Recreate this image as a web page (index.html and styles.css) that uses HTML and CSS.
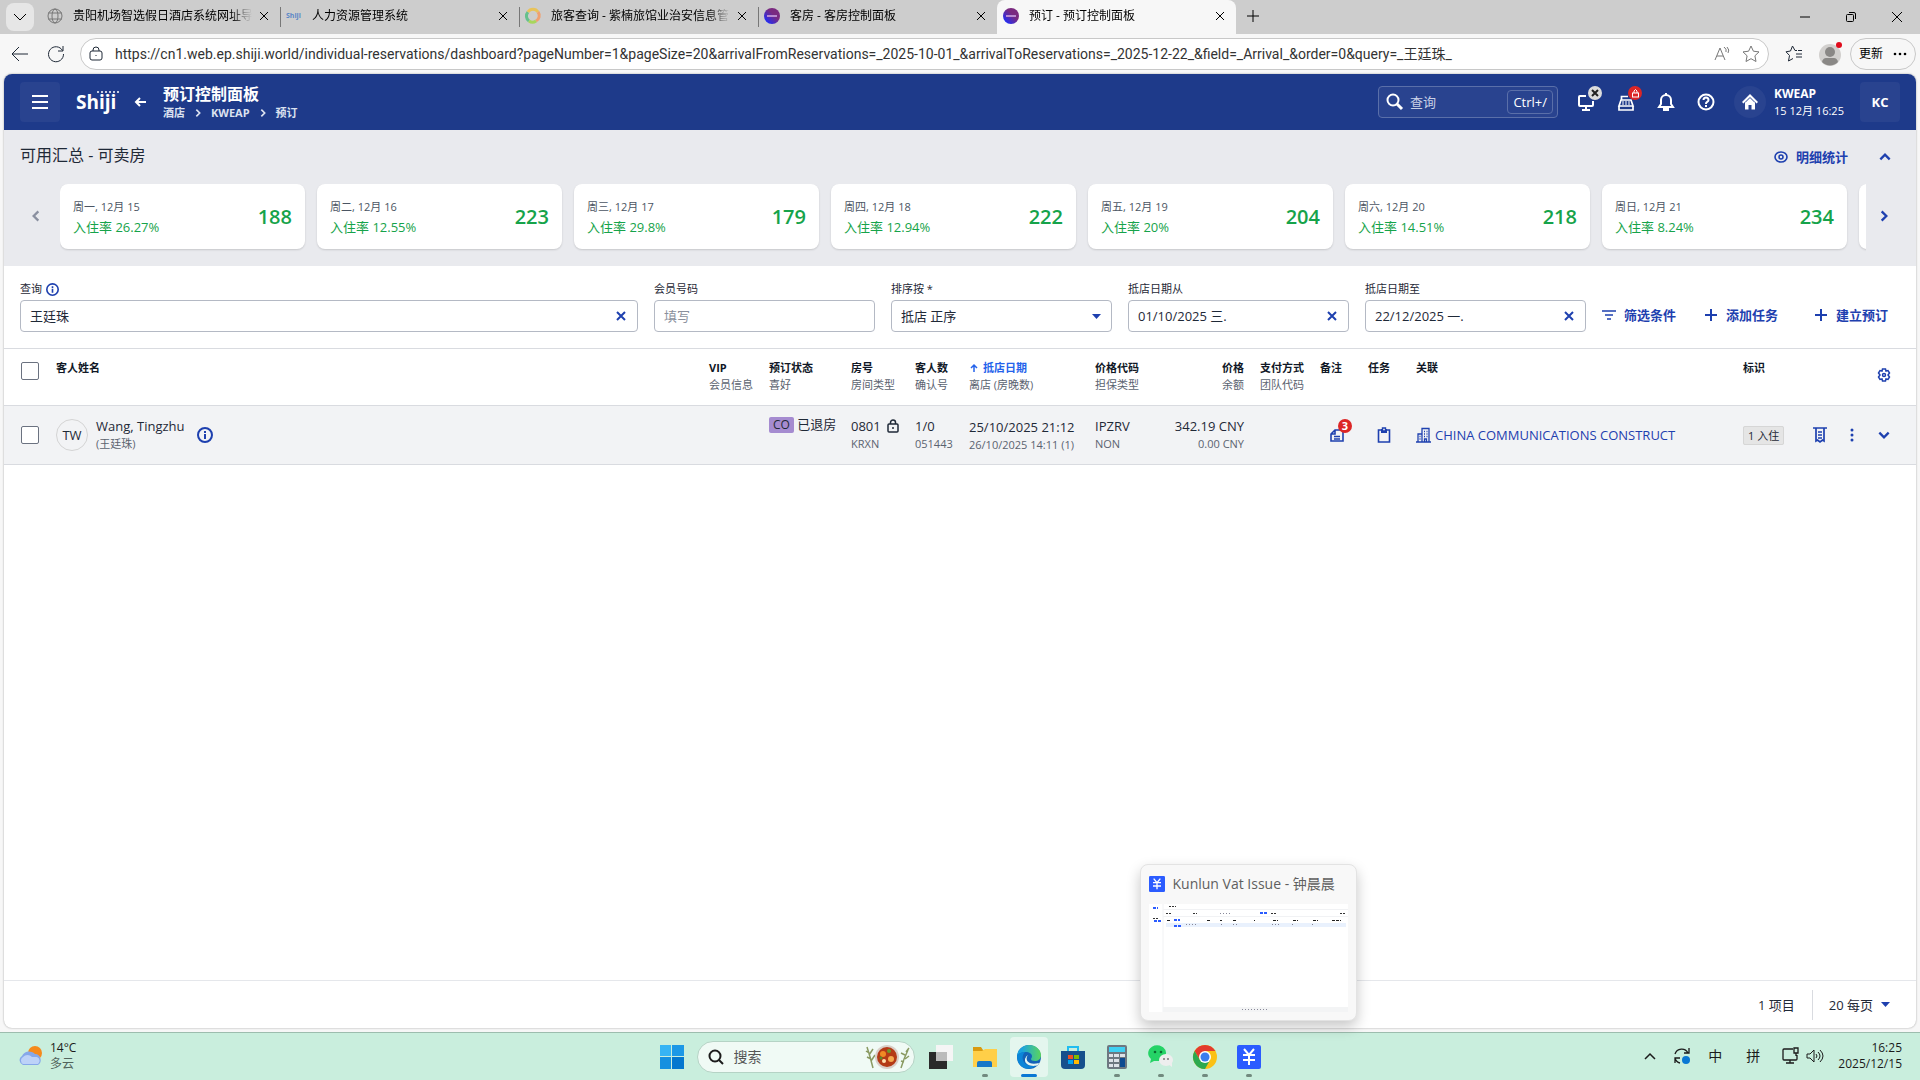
FILE: index.html
```html
<!DOCTYPE html>
<html lang="zh-CN">
  <head>
    <meta charset="UTF-8" />
    <meta name="viewport" content="width=device-width, initial-scale=1.0" />
    <title>预订 - 预订控制面板</title>
    <link rel="stylesheet" href="styles.css">
  </head>
  <body>
    <!-- Shared icons -->
    <svg class="sprite" aria-hidden="true">
      <symbol id="close" viewBox="0 0 12 12"><path d="M2 2l8 8M10 2l-8 8" /></symbol>
      <symbol id="plus" viewBox="0 0 14 14"><path d="M7 1v12M1 7h12" /></symbol>
      <symbol id="chevron" viewBox="0 0 12 12"><path d="M4 2l4 4-4 4" /></symbol>
      <symbol id="info" viewBox="0 0 16 16"><circle cx="8" cy="8" r="7" /><path d="M8 7v5M8 4v2" /></symbol>
      <symbol id="yen" viewBox="0 0 24 24">
        <rect width="24" height="24" rx="2" fill="#2b5cff" />
        <path d="M7 4l5 6 5-6M6 10h12M6 15h12M12 10v10" fill="none" stroke="#fff" stroke-width="2" />
      </symbol>
      <symbol id="brand" viewBox="0 0 16 16">
        <circle cx="8" cy="8" r="8" fill="url(#brandFill)" />
        <path d="M3 8h10" stroke="#b98ad0" stroke-width="2" />
      </symbol>
      <defs>
        <linearGradient id="brandFill" x1="0" y1="1" x2="1" y2="0">
          <stop offset="0.1" stop-color="#1a2dff" />
          <stop offset="0.6" stop-color="#7a2a80" />
        </linearGradient>
      </defs>
    </svg>

    <!-- Tab strip -->
    <div class="tabStrip">
      <button class="tabMenu" aria-label="标签页菜单">
        <svg class="line" width="14" height="14" viewBox="0 0 14 14"><path d="M1 4l6 6 6-6" /></svg>
      </button>
      <div class="tab">
        <svg class="line grey" width="16" height="16" viewBox="0 0 16 16"><circle cx="8" cy="8" r="7" /><ellipse cx="8" cy="8" rx="3" ry="7" /><path d="M1 5h14M1 11h14" /></svg>
        <span class="tabTitle">贵阳机场智选假日酒店系统网址导</span>
        <button aria-label="关闭"><svg class="line" width="12" height="12"><use href="#close" /></svg></button>
      </div>
      <div class="tab divided">
        <span class="shijiMini">Shiji</span>
        <span class="tabTitle">人力资源管理系统</span>
        <button aria-label="关闭"><svg class="line" width="12" height="12"><use href="#close" /></svg></button>
      </div>
      <div class="tab divided">
        <svg width="16" height="16" viewBox="0 0 16 16" fill="none" stroke-width="3"><path d="M4 13A6 6 0 0 1 3 4" stroke="#66c18c" /><path d="M3 4a6 6 0 0 1 10 0" stroke="#e8c35a" /><path d="M13 4a6 6 0 0 1-2 9" stroke="#f0a070" /><path d="M11 13a6 6 0 0 1-7 0" stroke="#a8d65c" /></svg>
        <span class="tabTitle">旅客查询 - 紫楠旅馆业治安信息管</span>
        <button aria-label="关闭"><svg class="line" width="12" height="12"><use href="#close" /></svg></button>
      </div>
      <div class="tab divided">
        <svg width="16" height="16"><use href="#brand" /></svg>
        <span class="tabTitle">客房 - 客房控制面板</span>
        <button aria-label="关闭"><svg class="line" width="12" height="12"><use href="#close" /></svg></button>
      </div>
      <div class="tab active">
        <svg width="16" height="16"><use href="#brand" /></svg>
        <span class="tabTitle">预订 - 预订控制面板</span>
        <button aria-label="关闭"><svg class="line" width="12" height="12"><use href="#close" /></svg></button>
      </div>
      <button class="newTab" aria-label="新建标签页"><svg class="line" width="14" height="14"><use href="#plus" /></svg></button>
      <div class="windowButtons">
        <button aria-label="最小化"><svg class="line" width="12" height="12"><path d="M1 6h10" /></svg></button>
        <button aria-label="还原"><svg class="line" width="12" height="12"><rect x="1.500" y="3.500" width="7" height="7" rx="1" /><path d="M4 1.500h5q1.500 0 1.500 1.500v5" /></svg></button>
        <button aria-label="关闭窗口"><svg class="line" width="12" height="12"><path d="M1 1l10 10M11 1L1 11" /></svg></button>
      </div>
    </div>

    <!-- Address bar -->
    <div class="toolbar">
      <button aria-label="返回"><svg class="line" width="18" height="16"><path d="M8 1L1 8l7 7M1 8h16" /></svg></button>
      <button aria-label="刷新"><svg class="line" width="18" height="18"><path d="M15.500 5.500A7.500 7.500 0 1 0 16.500 9M16 1v5h-5" /></svg></button>
      <div class="address">
        <svg class="line" width="14" height="16"><rect x="1" y="5" width="12" height="9" rx="2" /><path d="M4 5V4a3 3 0 0 1 6 0v1M7 9v1" /></svg>
        <input type="text" aria-label="地址" value="https://cn1.web.ep.shiji.world/individual-reservations/dashboard?pageNumber=1&amp;pageSize=20&amp;arrivalFromReservations=_2025-10-01_&amp;arrivalToReservations=_2025-12-22_&amp;field=_Arrival_&amp;order=0&amp;query=_王廷珠_" />
        <svg class="line grey" width="16" height="16"><path d="M1 14L6 2l5 12M3 10h6M10 1q3 2 2 5M13 1q3 3 1 6" /></svg>
        <svg class="line grey" width="18" height="18" viewBox="0 0 18 18"><path d="M9 1l2.400 5.200 5.600.7-4.100 3.900 1.100 5.700L9 13.700l-5 2.800 1.100-5.700L1 6.900l5.600-.7z" /></svg>
      </div>
      <button class="favorites" aria-label="收藏夹"><svg class="line" width="18" height="18"><path d="M12 5.500h-2L7.500 1 5.500 6 1 6.800l3.500 3.700-1 5.500L8 13.500M11 9h6M11 12h6M13 5.500h4" /></svg></button>
      <button class="profile" aria-label="个人资料">
        <svg width="24" height="26"><circle cx="11" cy="14" r="11" fill="#d2d0ce" /><circle cx="11" cy="11" r="5" fill="#8a8886" /><path d="M3 21q1-4 4-4h8q3 0 4 4a11 11 0 0 1-16 0" fill="#8a8886" /><circle cx="20" cy="4" r="3" fill="#e00b1c" /></svg>
      </button>
      <button class="update">更新 <svg width="14" height="4"><circle cx="2" cy="2" r="1.300" /><circle cx="7" cy="2" r="1.300" /><circle cx="12" cy="2" r="1.300" /></svg></button>
    </div>

    <main class="app">
      <!-- App header -->
      <header class="appHeader">
        <button class="square" aria-label="菜单"><svg class="line thick" width="18" height="16"><path d="M1 2h16M1 8h16M1 14h16" /></svg></button>
        <a href="#" class="logo">Shiji<svg width="22" height="3" fill="#fff"><circle cx="1" cy="1" r="1" /><circle cx="5" cy="1" r="1" /><circle cx="9" cy="1" r="1" /><circle cx="13" cy="1" r="1" /><circle cx="17" cy="1" r="1" /><circle cx="21" cy="1" r="1" /></svg></a>
        <a href="#" class="back" aria-label="返回"><svg class="line thick" width="12" height="10"><path d="M5 1L1 5l4 4M1 5h10" /></svg></a>
        <div class="heading">
          <h1>预订控制面板</h1>
          <nav>
            <a href="#">酒店</a>
            <svg class="line thick" width="10" height="10"><use href="#chevron" /></svg>
            <a href="#">KWEAP</a>
            <svg class="line thick" width="10" height="10"><use href="#chevron" /></svg>
            <a href="#">预订</a>
          </nav>
        </div>
        <label class="quickSearch">
          <svg class="line thick" width="18" height="18"><circle cx="7" cy="7" r="5.500" /><path d="M11 11l5 5" stroke-width="3" /></svg>
          <input type="text" placeholder="查询" />
          <kbd>Ctrl+/</kbd>
        </label>
        <div class="headerIcons">
          <button aria-label="连接">
            <svg class="line thick" width="20" height="20"><path d="M10 4H4q-1 0-1 1v8q0 1 1 1h12q1 0 1-1V9M10 14v4M6 18h8" /></svg>
            <span class="dot light"><svg class="line thick" width="8" height="8"><path d="M1 1l6 6M7 1L1 7" /></svg></span>
          </button>
          <button aria-label="收银">
            <svg class="line" width="20" height="20"><path d="M12 4.500H5.500V8M5 8h10l2 6H3zM3 14v4h14v-4" stroke-width="1.700" /><path d="M6 10h8M6 12h8" stroke-dasharray="2 1" /></svg>
            <span class="dot red"><svg class="line" width="9" height="11"><rect x="1.500" y="5" width="6" height="4" /><path d="M3 5V3q1.500-3 3 0v2" /></svg></span>
          </button>
          <button aria-label="通知"><svg class="line thick" width="20" height="20"><path d="M3 15l2-3V8a5 5 0 0 1 10 0v4l2 3zM10 1v2" /><path d="M8 17h4v1H8z" /></svg></button>
          <button aria-label="帮助"><svg class="line thick" width="20" height="20"><circle cx="10" cy="10" r="7.500" /><path d="M7.500 8q0-2.500 2.500-2.500T12.500 8q0 1-1.300 1.800T10 12M10 13v2" /></svg></button>
        </div>
        <div class="property">
          <span class="home"><svg width="18" height="18" viewBox="0 0 18 18"><path d="M9 1L1 9l1.500 1.500L4 9v7.500h3.500V12h3v4.500H14V9l1.500 1.500L17 9z" fill="#fff" /><path d="M4 9.500l5-5 5 5" fill="none" stroke="#29438f" /></svg></span>
          <div>
            <strong>KWEAP</strong>
            <span>15 12月 16:25</span>
          </div>
        </div>
        <button class="square user">KC</button>
      </header>

      <!-- Availability summary -->
      <section class="summary">
        <div class="summaryTop">
          <h2>可用汇总 - 可卖房</h2>
          <button class="textButton"><svg class="line" width="14" height="14"><ellipse cx="7" cy="7" rx="6" ry="5" stroke-width="1.600" /><circle cx="7" cy="7" r="2" stroke-width="1.600" /></svg>明细统计</button>
          <button class="iconButton" aria-label="收起"><svg class="line thick up" width="14" height="14"><use href="#chevron" /></svg></button>
        </div>
        <div class="carousel">
          <button class="iconButton muted" aria-label="上一页"><svg class="line thick flip" width="14" height="14"><use href="#chevron" /></svg></button>
          <div class="cards">
            <article class="card"><div><span class="day">周一, 12月 15</span><span class="rate">入住率 26.27%</span></div><strong>188</strong></article>
            <article class="card"><div><span class="day">周二, 12月 16</span><span class="rate">入住率 12.55%</span></div><strong>223</strong></article>
            <article class="card"><div><span class="day">周三, 12月 17</span><span class="rate">入住率 29.8%</span></div><strong>179</strong></article>
            <article class="card"><div><span class="day">周四, 12月 18</span><span class="rate">入住率 12.94%</span></div><strong>222</strong></article>
            <article class="card"><div><span class="day">周五, 12月 19</span><span class="rate">入住率 20%</span></div><strong>204</strong></article>
            <article class="card"><div><span class="day">周六, 12月 20</span><span class="rate">入住率 14.51%</span></div><strong>218</strong></article>
            <article class="card"><div><span class="day">周日, 12月 21</span><span class="rate">入住率 8.24%</span></div><strong>234</strong></article>
            <article class="card"></article>
          </div>
          <button class="iconButton next" aria-label="下一页"><svg class="line thick" width="14" height="14"><use href="#chevron" /></svg></button>
        </div>
      </section>

      <!-- Filters -->
      <form class="filters">
        <div class="field wide">
          <label for="query">查询 <svg class="line blue" width="13" height="13" stroke-width="2"><use href="#info" /></svg></label>
          <div class="control">
            <input type="text" id="query" value="王廷珠" />
            <button type="button" aria-label="清除"><svg class="line thick" width="12" height="12"><use href="#close" /></svg></button>
          </div>
        </div>
        <div class="field">
          <label for="member">会员号码</label>
          <div class="control"><input type="text" id="member" placeholder="填写" /></div>
        </div>
        <div class="field">
          <label for="sort">排序按 *</label>
          <div class="control">
            <select id="sort"><option>抵店 正序</option></select>
            <svg class="caret" width="9" height="5"><path d="M0 0h9L4.500 5z" /></svg>
          </div>
        </div>
        <div class="field">
          <label for="from">抵店日期从</label>
          <div class="control">
            <input type="text" id="from" value="01/10/2025 三." />
            <button type="button" aria-label="清除"><svg class="line thick" width="12" height="12"><use href="#close" /></svg></button>
          </div>
        </div>
        <div class="field">
          <label for="to">抵店日期至</label>
          <div class="control">
            <input type="text" id="to" value="22/12/2025 一." />
            <button type="button" aria-label="清除"><svg class="line thick" width="12" height="12"><use href="#close" /></svg></button>
          </div>
        </div>
        <div class="filterActions">
          <button type="button" class="textButton"><svg class="line" width="14" height="14"><path d="M0 3h14M3 7h8M5 11h4" stroke-width="1.600" /></svg>筛选条件</button>
          <button type="button" class="textButton"><svg class="line thick" width="14" height="14"><use href="#plus" /></svg>添加任务</button>
          <button type="button" class="textButton last"><svg class="line thick" width="14" height="14"><use href="#plus" /></svg>建立预订</button>
        </div>
      </form>

      <!-- Reservations -->
      <table>
        <colgroup>
          <col class="colCheck" /><col /><col class="colVip" /><col class="colStatus" /><col class="colRoom" /><col class="colGuests" />
          <col class="colDate" /><col class="colCode" /><col class="colPrice" /><col class="colPay" /><col class="colNote" />
          <col class="colTask" /><col class="colLink" /><col class="colFlag" /><col class="colActions" />
        </colgroup>
        <thead>
          <tr>
            <th class="check"><input type="checkbox" aria-label="全选" /></th>
            <th>客人姓名</th>
            <th>VIP<small>会员信息</small></th>
            <th>预订状态<small>喜好</small></th>
            <th>房号<small>房间类型</small></th>
            <th>客人数<small>确认号</small></th>
            <th><a href="#" class="sorted"><svg class="line thick" width="8" height="8"><path d="M4 8V1M1 4l3-3 3 3" stroke-width="1.500" /></svg>抵店日期</a><small>离店 (房晚数)</small></th>
            <th>价格代码<small>担保类型</small></th>
            <th class="number">价格<small>余额</small></th>
            <th>支付方式<small>团队代码</small></th>
            <th>备注</th>
            <th>任务</th>
            <th>关联</th>
            <th>标识</th>
            <th class="settings">
              <button class="iconButton" aria-label="设置"><svg class="line" width="14" height="14"><path d="M5.500 1h3l.5 2 2-.5 1.500 2.500-1.500 2 1.500 2L11 11.500l-2-.5-.5 2h-3L5 11l-2 .5L1.500 9 3 7 1.500 5 3 2.500l2 .5z" stroke-width="1.500" /><circle cx="7" cy="7" r="1.500" stroke-width="1.500" /></svg></button>
            </th>
          </tr>
        </thead>
        <tbody>
          <tr>
            <td class="check"><input type="checkbox" aria-label="选择 Wang, Tingzhu" /></td>
            <td>
              <div class="guest">
                <span class="avatar">TW</span>
                <div>Wang, Tingzhu<small>(王廷珠)</small></div>
                <svg class="line thick blue" width="16" height="16"><use href="#info" /></svg>
              </div>
            </td>
            <td></td>
            <td class="status"><span class="code">CO</span> 已退房</td>
            <td><span class="room">0801 <svg class="line" width="12" height="14"><rect x="1" y="5" width="10" height="8" rx="1" stroke-width="1.500" /><path d="M3.500 5V3.500a2.500 2.500 0 0 1 5 0V5M6 8v2" stroke-width="1.500" /></svg></span><small>KRXN</small></td>
            <td>1/0<small>051443</small></td>
            <td class="dates">25/10/2025 21:12<small>26/10/2025 14:11 (1)</small></td>
            <td>IPZRV<small>NON</small></td>
            <td class="number">342.19 CNY<small>0.00 CNY</small></td>
            <td></td>
            <td class="center">
              <button class="iconButton noteButton" aria-label="备注"><svg class="line" width="16" height="16"><path d="M6 3h8v11H2V7zM6 3v4H2M5 9.500h6M5 12h6" stroke-width="1.600" /></svg><span class="dot count">3</span></button>
            </td>
            <td class="center">
              <button class="iconButton" aria-label="任务"><svg class="line" width="14" height="16"><path d="M1.500 3h11v12h-11z" stroke-width="1.600" /><path d="M4 2h6v4H4z" fill="#1e40af" stroke="none" /><path d="M5.500 1h3v3h-3z" fill="#f2f3f5" stroke-width="1.400" /></svg></button>
            </td>
            <td><a href="#" class="company"><svg class="line" width="15" height="16"><path d="M0 15h15M2 15V7h4M6 15V1.500h7V15M8 4.500h1M10.500 4.500h1M8 7h1M10.500 7h1M8 9.500h1M10.500 9.500h1M3.500 9.500h1M3.500 12h1M8.500 15v-3h2v3" stroke-width="1.300" /></svg>CHINA COMMUNICATIONS CONSTRUCT</a></td>
            <td><span class="flag">1 入住</span></td>
            <td>
              <div class="rowActions">
                <button class="iconButton" aria-label="账单"><svg class="line thick" width="14" height="16"><path d="M0 1h14M3 1v13l1.500-1L7 15l2.500-2 1.500 1V1M5 5h4M5 8h4M5 11h4" stroke-width="1.700" /></svg></button>
                <button class="iconButton" aria-label="更多"><svg width="4" height="14" fill="#1e40af"><circle cx="2" cy="2" r="1.500" /><circle cx="2" cy="7" r="1.500" /><circle cx="2" cy="12" r="1.500" /></svg></button>
                <button class="iconButton" aria-label="展开"><svg class="line thick down" width="14" height="14"><use href="#chevron" /></svg></button>
              </div>
            </td>
          </tr>
        </tbody>
      </table>

      <footer class="pager">
        <span class="total">1 项目</span>
        <button>20 每页 <svg class="caret" width="9" height="5"><path d="M0 0h9L4.500 5z" /></svg></button>
      </footer>
    </main>

    <!-- Taskbar -->
    <div class="taskbar">
      <div class="weather">
        <svg width="26" height="22"><circle cx="17" cy="8" r="7" fill="#f58a1c" /><path d="M5 20a5 5 0 0 1-1-9 8 8 0 0 1 13-2 6 6 0 0 1 3 11z" fill="#86a8ea" /><path d="M5 19a4 4 0 0 1 0-7 6 6 0 0 1 9 0h5a4 4 0 0 1 1 7z" fill="#bdd2f8" /></svg>
        <div>14°C<span>多云</span></div>
      </div>
      <div class="apps">
        <button aria-label="开始"><svg width="24" height="24"><path d="M0 0h11v11H0z" fill="#36b4f4" /><path d="M12 0h12v11H12z" fill="#1c98e6" /><path d="M0 12h11v12H0z" fill="#1590e0" /><path d="M12 12h12v12H12z" fill="#0477cf" /></svg></button>
        <label class="taskSearch">
          <svg class="line thick" width="16" height="16"><circle cx="7" cy="7" r="5.500" /><path d="M11 11l4 4" /></svg>
          <input type="text" placeholder="搜索" />
          <svg width="46" height="26"><path d="M9 24Q6 12 3 3M2 7l3 2M9 5l-4 6M3 13l4 2M11 11l-4 6M37 24q3-10 7-18M37 17l3 1M45 12l-4 3M37 9l4 2M45 4l-3 4" stroke="#8a9a62" stroke-width="1.500" fill="none" /><circle cx="23" cy="13" r="12" fill="#d9cfc8" /><circle cx="23" cy="13" r="10" fill="#b43a16" /><circle cx="19" cy="10" r="3" fill="#f08a24" /><circle cx="27" cy="15" r="3" fill="#f5a94e" /><circle cx="25" cy="7" r="2" fill="#6c9a2c" /><circle cx="20" cy="17" r="2" fill="#ffe0ae" /><circle cx="17" cy="14" r="1.500" fill="#5b8a28" /></svg>
        </label>
        <button aria-label="任务视图"><svg width="24" height="24"><path d="M0 7h18v17H0z" fill="#2a2a2a" /><path d="M7 0h17v16H7z" fill="#f5f5f5" /><path d="M7 7h11v9H7z" fill="#bbb" /></svg></button>
        <button class="running" aria-label="文件资源管理器"><svg width="26" height="24"><path d="M1 2h8l2 3h12v4H1z" fill="#d99a10" /><path d="M1 6h9l3-2h12v18H1z" fill="#ffcf48" /><path d="M5 22v-4q0-2 2-2h11q2 0 2 2v4z" fill="#1678c8" /></svg></button>
        <button class="current" aria-label="Edge"><svg width="24" height="24" viewBox="0 0 24 24"><defs><linearGradient id="edge" x1="0" y1="0" x2="1" y2="0"><stop offset="0.2" stop-color="#1ba3e0" /><stop offset="1" stop-color="#5bd65b" /></linearGradient></defs><circle cx="12" cy="12" r="12" fill="#1363b8" /><path d="M0 11C1 4 6 0 12 0c7 0 12 5 12 10 0 4-3 6-6 6-3 0-4-1-4-2 0-1 1-1 1-3 0-2-3-4-6-4-4 0-8 2-9 4z" fill="url(#edge)" /><path d="M0 11c1-3 5-4 8-4-5 5-2 13 6 14l5-1C15 25 7 25 3 20 1 18 0 14 0 11z" fill="#0c85d8" /><path d="M11 10c-4 5 1 11 11 8l-1 2c-4 2-14 1-13-6q1-3 3-4z" fill="#e6f6f0" /></svg></button>
        <button aria-label="Microsoft Store"><svg width="24" height="24"><path d="M7 6V2h10v4" stroke="#21bdf0" stroke-width="2" fill="none" /><path d="M0 6h24v14q0 4-4 4H4q-4 0-4-4z" fill="#16508c" /><path d="M7 10h5v4H7z" fill="#f25022" /><path d="M13 10h5v4h-5z" fill="#7fba00" /><path d="M7 15h5v4H7z" fill="#00a4ef" /><path d="M13 15h5v4h-5z" fill="#ffb900" /></svg></button>
        <button class="running" aria-label="计算器"><svg width="20" height="24"><rect width="20" height="24" rx="2" fill="#6d7780" /><path d="M2 2h16v5H2z" fill="#3fd0f2" /><path d="M2 9h4v3H2zM7 9h5v3H7zM13 9h5v3h-5zM2 14h4v3H2zM7 14h5v3H7zM2 19h4v3H2zM7 19h5v3H7z" fill="#dde2e8" /><path d="M13 13h5v9h-5z" fill="#0e4a90" /></svg></button>
        <button class="running" aria-label="微信"><svg width="26" height="24"><path d="M2 18l1-4a9 8 0 1 1 8 2l-5 0z" fill="#25d366" /><circle cx="7" cy="7" r="1.300" fill="#0a6b30" /><circle cx="13" cy="7" r="1.300" fill="#0a6b30" /><ellipse cx="18" cy="15" rx="7" ry="6" fill="#eee" /><path d="M20 19l4 3v-4z" fill="#eee" /><circle cx="16" cy="14" r="1" fill="#777" /><circle cx="20" cy="14" r="1" fill="#777" /></svg></button>
        <button class="running" aria-label="Chrome"><svg width="24" height="24" viewBox="0 0 24 24"><circle cx="12" cy="12" r="12" fill="#fbc116" /><path d="M1.600 6A12 12 0 0 1 22.400 6H12L7 15z" fill="#e33b2e" /><path d="M1.600 6A12 12 0 0 0 12 24l5-9H7z" fill="#2da94f" /><circle cx="12" cy="12" r="6" fill="#fff" /><circle cx="12" cy="12" r="4.500" fill="#3b7ded" /></svg></button>
        <div class="previewSlot">
          <button class="running" aria-label="Kunlun Vat Issue"><svg width="24" height="24"><use href="#yen" /></svg></button>
          <div class="preview">
            <div class="previewTitle"><svg width="16" height="16"><use href="#yen" /></svg>Kunlun Vat Issue - 钟晨晨</div>
            <svg class="thumb" width="199" height="108">
              <path d="M0 0h199v108H0z" fill="#fff" />
              <path d="M14 0v108M14 5.500h185M14 12.500h185" stroke="#f1f2f4" />
              <path d="M14 103h185v5H14z" fill="#f3f4f5" />
              <path d="M17 19h180v4H17z" fill="#e9f1fd" />
              <path d="M4 4h5M5 17h8M25 16h6M25 22h8M111 9h7" stroke="#2b5cff" stroke-width="2" stroke-dasharray="3 1" />
              <path d="M20 2.500h7M17 9.500h6M44 9.500h4M122 9.500h6M191 9.500h6M4 14.500h5" stroke="#333" stroke-dasharray="2 1" />
              <path d="M18 16.500h3M58 16.500h3M71 16.500h2M84 16.500h3M105 16.500h1M124 16.500h5M144 16.500h5M164 16.500h5M183 16.500h9" stroke="#222" stroke-dasharray="3 1" />
              <path d="M37 20.500h11M72 20.500h1M84 20.500h4M123 20.500h7M143 20.500h1M163 20.500h1M71 9.500h12M93 105.500h25" stroke="#889" stroke-dasharray="1 2" />
            </svg>
          </div>
        </div>
      </div>
      <div class="tray">
        <button aria-label="隐藏的图标"><svg class="line" width="12" height="8"><path d="M1 7l5-5 5 5" stroke-width="1.500" /></svg></button>
        <button aria-label="同步"><svg class="line" width="18" height="18"><path d="M2 7a7 7 0 0 1 13-1M16 1v5h-5M2 11a7 7 0 0 0 5 5M2 16v-5h5" stroke-width="1.300" /><circle cx="13" cy="13" r="4" fill="#0a78d4" stroke="none" /></svg></button>
        <span class="ime">中</span>
        <span class="ime pinyin">拼</span>
        <button class="network" aria-label="网络"><svg class="line" width="17" height="17"><path d="M11 2H2q-1 0-1 1v9q0 1 1 1h12q1 0 1-1V8M8 13v3M4 16h8M12 1h4v5h-4zM14 6v3" stroke-width="1.300" /></svg></button>
        <button aria-label="音量"><svg class="line" width="18" height="16"><path d="M1 6h3l4-4v12l-4-4H1zM10 6q2 2 0 4M12 4q4 4 0 8M14 2q6 6 0 12" /></svg></button>
        <div class="clock">16:25<span>2025/12/15</span></div>
      </div>
    </div>
  </body>
</html>
```
FILE: styles.css
```css
* {
  box-sizing: border-box;
}
body {
  margin: 0;
  min-height: 100vh;
  display: flex;
  flex-direction: column;
  font-family: "Open Sans", "Noto Sans CJK SC", sans-serif;
  font-size: 13px;
  line-height: 18px;
  color: #1f2937;
  background-color: #f7f7f7;
}
button,
input,
select {
  font: inherit;
  color: inherit;
  background: none;
  border: none;
  padding: 0;
  margin: 0;
}
button {
  cursor: pointer;
  display: inline-flex;
  align-items: center;
  justify-content: center;
}
input {
  min-width: 0;
  outline: none;
}
a {
  color: inherit;
  text-decoration: none;
}
svg {
  flex: none;
  display: block;
  overflow: visible;
}
.sprite {
  position: absolute;
  width: 0;
  height: 0;
}
.line {
  fill: none;
  stroke: currentColor;
}
.thick {
  stroke-width: 2;
}
.grey {
  color: #777;
}
.blue {
  color: #1e40af;
}
.up {
  rotate: -90deg;
}
.down {
  rotate: 90deg;
}
.flip {
  rotate: 180deg;
}

/* Tab strip */
.tabStrip {
  display: flex;
  height: 34px;
  background-color: #cdcdcd;
  font-size: 12px;
  color: #000;
}
.tabMenu {
  width: 28px;
  height: 28px;
  margin: 3px 7px 3px 6px;
  border-radius: 8px;
  background-color: #e6e6e6;
}
.tab {
  display: flex;
  align-items: center;
  flex: 0 1 239px;
  min-width: 0;
  padding: 0 10px 2px 6px;
  gap: 10px;
}
.tab button {
  margin-left: -4px;
}
.tab.divided {
  background: linear-gradient(#777, #777) 0 7px / 1px 20px no-repeat;
}
.tab.active {
  background-color: #f7f7f7;
  border-radius: 8px 8px 0 0;
}
.tabTitle {
  flex: 1;
  overflow: hidden;
  white-space: nowrap;
  mask-image: linear-gradient(to right, #000 88%, transparent);
}
.shijiMini {
  width: 16px;
  font-size: 7px;
  font-weight: bold;
  color: #5b87c7;
}
.newTab {
  width: 34px;
  height: 32px;
}
.windowButtons {
  display: flex;
  margin-left: auto;
}
.windowButtons button {
  width: 46px;
}

/* Address bar */
.toolbar {
  display: flex;
  align-items: center;
  height: 40px;
  padding: 0 4px 0 11px;
}
.toolbar > button {
  width: 18px;
  margin-right: 18px;
}
.address {
  display: flex;
  align-items: center;
  gap: 12px;
  flex: 1;
  height: 32px;
  margin-left: -3px;
  padding: 0 8px;
  border: 1px solid #c8c8c8;
  border-radius: 16px;
  background-color: #fff;
}
.address input {
  flex: 1;
  font-family: Roboto, "Noto Sans CJK SC", sans-serif;
  font-size: 14px;
  color: #333;
}
.toolbar .favorites {
  margin: 0 16px;
}
.toolbar .profile {
  width: 24px;
  margin-right: 7px;
}
.toolbar .update {
  width: 66px;
  height: 32px;
  margin: 0;
  gap: 10px;
  border: 1px solid #c8c8c8;
  border-radius: 16px;
  font-size: 12px;
  color: #000;
}

/* App */
.app {
  flex: 1;
  display: flex;
  flex-direction: column;
  margin: 0 4px 4px;
  border-radius: 8px;
  background-color: #fff;
  box-shadow: 0 0 2px #999;
  overflow: hidden;
}
.appHeader {
  display: flex;
  align-items: center;
  height: 56px;
  padding: 0 16px;
  color: #fff;
  background-color: #1e3a8a;
}
.square {
  width: 40px;
  height: 40px;
  border-radius: 4px;
  background-color: #29438f;
}
.logo {
  position: relative;
  margin-left: 16px;
  width: 43px;
  font-size: 19px;
  font-weight: bold;
  line-height: 24px;
}
.logo svg {
  position: absolute;
  top: 1px;
  right: 0;
}
.back {
  margin: 0 16px;
}
.heading {
  padding-top: 1px;
}
.heading h1 {
  margin: 0;
  font-size: 16px;
  line-height: 20px;
}
.heading nav {
  display: flex;
  align-items: center;
  gap: 8px;
  font-size: 11px;
  font-weight: bold;
  color: #dbe1f0;
}
.quickSearch {
  display: flex;
  align-items: center;
  gap: 6px;
  width: 180px;
  height: 32px;
  margin-left: auto;
  padding: 0 4px 0 7px;
  border: 1px solid #5a6fa9;
  border-radius: 4px;
  background-color: #29438f;
}
.quickSearch input {
  flex: 1;
}
.quickSearch input::placeholder {
  color: #c9d1e6;
  opacity: 1;
}
.quickSearch kbd {
  padding: 2px 5px;
  border: 1px solid #5a6fa9;
  border-radius: 4px;
  font-family: inherit;
}
.headerIcons {
  display: flex;
  gap: 20px;
  margin-left: 18px;
}
.headerIcons button {
  position: relative;
}
.dot {
  position: absolute;
  top: -8px;
  right: -7px;
  display: flex;
  align-items: center;
  justify-content: center;
  width: 14px;
  height: 14px;
  border-radius: 50%;
  font-size: 11px;
  font-weight: bold;
  line-height: 14px;
}
.headerIcons .dot {
  top: -6px;
  right: -6px;
}
.light {
  color: #222;
  background-color: #ddd;
}
.red,
.count {
  color: #fff;
  background-color: #dc2626;
}
.property {
  display: flex;
  align-items: center;
  gap: 8px;
  width: 126px;
  margin-left: 18px;
  white-space: nowrap;
}
.home {
  display: flex;
  align-items: center;
  justify-content: center;
  width: 32px;
  height: 32px;
  border-radius: 50%;
  background-color: #29438f;
}
.property strong,
.property div span {
  display: block;
  line-height: 17px;
}
.property strong {
  font-size: 12px;
}
.property div span {
  font-size: 11px;
}
.user {
  font-weight: bold;
}

/* Availability summary */
.summary {
  height: 136px;
  background-color: #e9eaee;
}
.summaryTop {
  display: flex;
  align-items: center;
  height: 54px;
  padding: 0 24px 0 16px;
}
.summaryTop h2 {
  flex: 1;
  margin: 0;
  padding-bottom: 4px;
  font-size: 16px;
  font-weight: normal;
}
.textButton {
  gap: 8px;
  font-weight: bold;
  color: #1e40af;
  white-space: nowrap;
}
.iconButton {
  color: #1e40af;
}
.muted {
  color: #8a90a0;
}
.summaryTop .iconButton {
  margin-left: 30px;
}
.carousel {
  display: flex;
}
.carousel > .iconButton {
  flex: none;
  padding-bottom: 4px;
}
.carousel > .muted {
  width: 56px;
  padding-left: 8px;
}
.carousel > .next {
  width: 50px;
  padding-right: 14px;
}
.cards {
  display: flex;
  gap: 12px;
  flex: 1;
  min-width: 0;
  padding-bottom: 3px;
  overflow: hidden;
}
.card {
  display: flex;
  align-items: center;
  justify-content: space-between;
  flex: 0 0 245px;
  height: 65px;
  padding: 0 13px;
  border-radius: 8px;
  background-color: #fff;
  box-shadow: 0 1px 2px rgba(0, 0, 0, 0.15);
}
.day,
.rate {
  display: block;
  line-height: 21px;
}
.day {
  font-size: 11px;
  color: #4b5563;
}
.rate,
.card strong {
  color: #16a34a;
}
.card strong {
  font-size: 20px;
  font-weight: 600;
}

/* Filters */
.filters {
  display: flex;
  align-items: flex-start;
  gap: 16px;
  padding: 14px 28px 16px 16px;
  border-bottom: 1px solid #d9dbe0;
}
.field {
  flex: 0 1 221px;
  min-width: 0;
}
.field.wide {
  flex: 1 1 auto;
}
.field label {
  display: flex;
  align-items: center;
  gap: 4px;
  height: 18px;
  margin-bottom: 2px;
  font-size: 11px;
}
.control {
  display: flex;
  align-items: center;
  height: 32px;
  padding: 0 10px 0 9px;
  border: 1px solid #b4b9c4;
  border-radius: 4px;
}
.control input,
.control select {
  flex: 1;
  min-width: 0;
}
.control select {
  appearance: none;
}
.control ::placeholder {
  color: #8a909c;
  opacity: 1;
}
.control button {
  color: #1e40af;
}
.caret {
  fill: #1e40af;
}
.filterActions {
  display: flex;
  gap: 28px;
  padding-top: 26px;
}
.filterActions .last {
  margin-left: 8px;
}

/* Reservations */
table {
  width: 100%;
  table-layout: fixed;
  border-collapse: separate;
  border-spacing: 0;
}
.colCheck {
  width: 52px;
}
.colVip,
.colPay {
  width: 60px;
}
.colStatus {
  width: 82px;
}
.colRoom {
  width: 64px;
}
.colGuests {
  width: 54px;
}
.colDate {
  width: 126px;
}
.colCode {
  width: 65px;
}
.colPrice {
  width: 100px;
}
.colNote,
.colTask {
  width: 48px;
}
.colLink {
  width: 327px;
}
.colFlag {
  width: 67px;
}
.colActions {
  width: 106px;
}
th,
td {
  padding: 0;
  text-align: left;
  white-space: nowrap;
  border-bottom: 1px solid #d9dbe0;
}
th {
  height: 57px;
  padding-top: 10px;
  vertical-align: top;
  font-size: 11px;
  line-height: 17px;
  color: #111827;
}
td {
  height: 59px;
  background-color: #f2f3f5;
}
small {
  display: block;
  font-size: 11px;
  font-weight: normal;
  color: #5b6370;
}
.check {
  padding-left: 17px;
}
.check input {
  appearance: none;
  display: block;
  width: 18px;
  height: 18px;
  margin-top: 3px;
  border: 1px solid #6b7280;
  border-radius: 2px;
  background-color: #fff;
}
td.check input {
  margin-top: 0;
}
.number {
  padding-right: 16px;
  text-align: right;
}
.sorted {
  display: flex;
  align-items: center;
  gap: 5px;
  padding-left: 1px;
  color: #2563eb;
}
.settings {
  padding: 0 25px 0 0;
  text-align: right;
  vertical-align: middle;
}
.guest {
  display: flex;
  align-items: center;
}
.avatar {
  display: flex;
  align-items: center;
  justify-content: center;
  width: 32px;
  height: 32px;
  margin-right: 8px;
  border: 1px solid #d4d4d4;
  border-radius: 50%;
}
.guest > svg {
  margin-left: 12px;
}
.status {
  padding-top: 9px;
  vertical-align: top;
}
.code {
  display: inline-block;
  padding: 0 4px;
  border-radius: 2px;
  font-size: 12px;
  line-height: 16px;
  background-color: #a58bd0;
}
.room {
  display: flex;
  align-items: center;
  gap: 6px;
}
.dates {
  padding-top: 1px;
}
.center {
  padding-left: 9px;
}
.noteButton {
  position: relative;
}
.center button {
  display: flex;
}
.company {
  display: flex;
  align-items: center;
  gap: 4px;
  color: #1e40af;
}
.flag {
  padding: 1px 4px;
  border: 1px solid #d6d6d6;
  border-radius: 2px;
  font-size: 11px;
  background-color: #e5e5e5;
}
.rowActions {
  display: flex;
  align-items: center;
  justify-content: flex-end;
  gap: 23px;
  padding-right: 25px;
}
.pager {
  display: flex;
  align-items: center;
  justify-content: flex-end;
  height: 48px;
  margin-top: auto;
  border-top: 1px solid #e5e7eb;
}
.total {
  padding: 6px 17px 6px 0;
  border-right: 1px solid #d9dbe0;
}
.pager button {
  gap: 8px;
  padding: 0 26px 0 16px;
}

/* Taskbar */
.taskbar {
  display: grid;
  grid-template-columns: 1fr auto 1fr;
  align-items: center;
  height: 48px;
  border-top: 1px solid #9dbdae;
  background-color: #c9eedd;
  font-size: 12px;
  line-height: 16px;
  color: #1b1b1b;
}
.weather {
  display: flex;
  align-items: center;
  gap: 6px;
  padding: 0 0 2px 18px;
}
.weather span,
.clock span {
  display: block;
}
.weather span {
  color: #52645c;
}
.apps {
  display: flex;
  align-items: center;
}
.apps button {
  position: relative;
  width: 44px;
  height: 40px;
}
.running::after,
.current::after {
  content: "";
  position: absolute;
  bottom: 0;
  left: 19px;
  width: 6px;
  height: 3px;
  border-radius: 2px;
  background-color: #718a7e;
}
.apps .current {
  width: 38px;
  margin: 0 3px;
  border-radius: 4px;
  background-color: #e4f6ee;
}
.current::after {
  left: 11px;
  width: 16px;
  background-color: #0a78d4;
}
.taskSearch {
  display: flex;
  align-items: center;
  gap: 10px;
  width: 218px;
  height: 32px;
  margin: 0 4px 0 3px;
  padding: 0 4px 0 10px;
  border: 1px solid #b5d3c5;
  border-radius: 16px;
  background-color: #f0faf5;
}
.taskSearch input {
  flex: 1;
  font-size: 14px;
}
.taskSearch input::placeholder {
  color: #555;
  opacity: 1;
}
.previewSlot {
  position: relative;
}
.preview {
  position: absolute;
  bottom: 56px;
  left: 50%;
  width: 217px;
  margin-left: -109px;
  padding: 7px 8px 8px;
  border: 1px solid #e3e3e3;
  border-radius: 8px;
  background-color: #f8f8f8;
  box-shadow: 0 6px 14px rgba(0, 0, 0, 0.22);
}
.previewTitle {
  display: flex;
  align-items: center;
  gap: 8px;
  height: 24px;
  margin-bottom: 8px;
  font-size: 14px;
  color: #5f5f5f;
  white-space: nowrap;
}
.tray {
  display: flex;
  align-items: center;
  justify-content: flex-end;
  gap: 17px;
  padding: 0 18px 2px 0;
}
.ime {
  font-size: 14px;
}
.pinyin {
  margin: 0 5px 0 7px;
}
.network {
  margin-right: -10px;
}
.clock {
  margin-left: -3px;
  text-align: right;
}
```
